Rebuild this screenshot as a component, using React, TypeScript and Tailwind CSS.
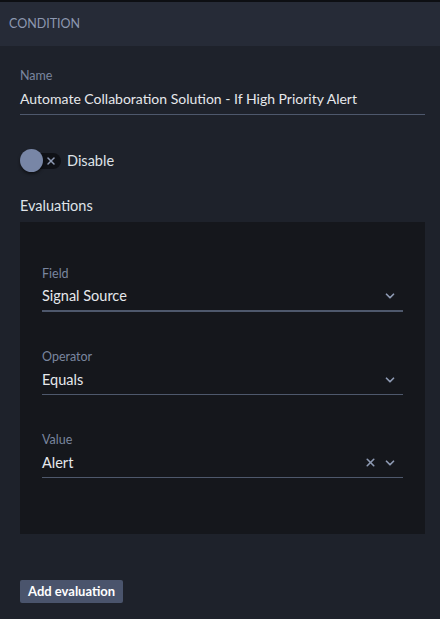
import { ChevronDown, X } from "lucide-react";

function SelectField({
  label,
  value,
  clearable,
  thick,
}: {
  label: string;
  value: string;
  clearable?: boolean;
  thick?: boolean;
}) {
  return (
    <div className="flex flex-col">
      <label className="text-[12.5px] leading-[16px] text-[#7a869f]">{label}</label>
      <div
        className={`flex items-center h-[30px] ${
          thick ? "border-b-2 border-[#4e586c]" : "border-b border-[#4e586c]"
        }`}
      >
        <span className="flex-1 text-[14.5px] text-[#e6e8ec]">{value}</span>
        {clearable && <X className="w-[13px] h-[13px] text-[#8e9ab3] mr-[6px]" strokeWidth={3} />}
        <ChevronDown className="w-[14px] h-[14px] text-[#8e9ab3] mr-[6px]" strokeWidth={3} />
      </div>
    </div>
  );
}

export default function App() {
  return (
    <div
      className="w-[440px] h-[619px] bg-[#1e222b] border-t-2 border-[#0d0f13] flex flex-col"
      style={{ fontFamily: 'Lato, "Noto Sans", sans-serif' }}
    >
      <header className="h-[44px] bg-[#262b37] flex items-center px-[9px]">
        <span className="text-[12.5px] text-[#8d98b0]">CONDITION</span>
      </header>

      <section className="pl-[20px] pr-[15px] pt-[22px] flex flex-col">
        <label className="text-[12.5px] leading-[16px] text-[#7a869f]">Name</label>
        <div className="h-[31px] pb-[1px] flex items-center border-b border-[#4e586c]">
          <span className="text-[14px] text-[#e6e8ec]">
            Automate Collaboration Solution - If High Priority Alert
          </span>
        </div>

        <div className="mt-[34px] flex items-center gap-[6px]">
          <div className="relative w-[41px] h-[23px] flex items-center">
            <div className="ml-[4px] w-[37px] h-[16px] rounded-full bg-[#0f1116] flex items-center justify-end pr-[4px]">
              <X className="w-[12px] h-[12px] text-[#8e9ab3]" strokeWidth={3} />
            </div>
            <div className="absolute left-0 top-0 w-[23px] h-[23px] rounded-full bg-[#7886a6] shadow-[0_2px_3px_rgba(0,0,0,0.5)]" />
          </div>
          <span className="text-[14.5px] text-[#dfe2e8]">Disable</span>
        </div>

        <h3 className="mt-[24px] text-[14.5px] leading-[20px] text-[#dfe2e8]">Evaluations</h3>

        <div className="mt-[6px] h-[312px] bg-[#15171c] px-[22px] pt-[44px] flex flex-col gap-[37px]">
          <SelectField label="Field" value="Signal Source" thick />
          <SelectField label="Operator" value="Equals" />
          <SelectField label="Value" value="Alert" clearable />
        </div>

        <div className="mt-[46px] flex">
          <button className="h-[23px] px-[8px] rounded-[2px] bg-[#4a546c] text-[13px] leading-[23px] font-bold text-white">
            Add evaluation
          </button>
        </div>
      </section>
    </div>
  );
}
